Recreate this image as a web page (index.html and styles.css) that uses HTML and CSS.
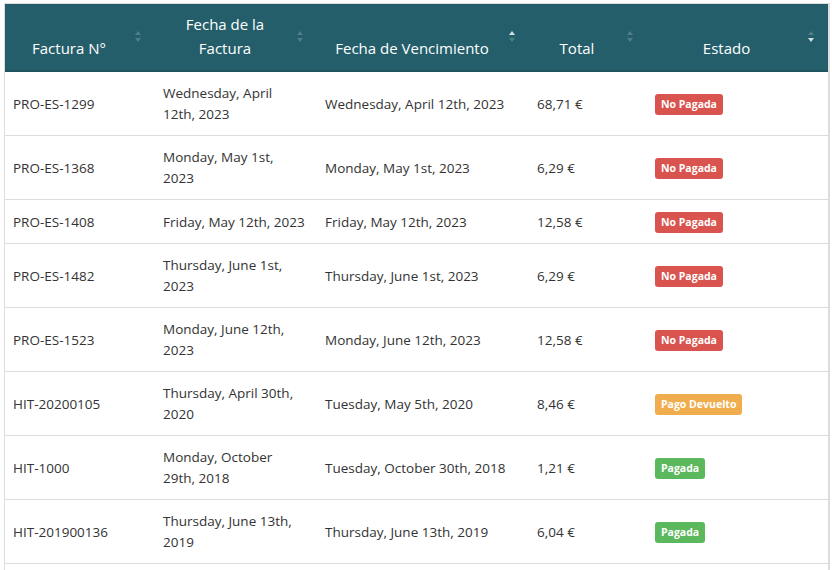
FILE: index.html
```html
<!DOCTYPE html>
<html lang="es">
<head>
<meta charset="utf-8">
<title>Facturas</title>
<link rel="stylesheet" href="styles.css">
</head>
<body>
<div class="panel">
  <table class="invoices">
    <colgroup>
      <col class="c1"><col class="c2"><col class="c3"><col class="c4"><col class="c5">
    </colgroup>
    <thead>
      <tr>
        <th class="sort">Factura N°</th>
        <th class="sort">Fecha de la Factura</th>
        <th class="sort asc">Fecha de Vencimiento</th>
        <th class="sort">Total</th>
        <th class="sort desc">Estado</th>
      </tr>
    </thead>
    <tbody>
      <tr><td>PRO-ES-1299</td><td class="date">Wednesday, April 12th, 2023</td><td>Wednesday, April 12th, 2023</td><td>68,71 €</td><td><span class="label danger">No Pagada</span></td></tr>
      <tr><td>PRO-ES-1368</td><td class="date">Monday, May 1st, 2023</td><td>Monday, May 1st, 2023</td><td>6,29 €</td><td><span class="label danger">No Pagada</span></td></tr>
      <tr><td>PRO-ES-1408</td><td class="date">Friday, May 12th, 2023</td><td>Friday, May 12th, 2023</td><td>12,58 €</td><td><span class="label danger">No Pagada</span></td></tr>
      <tr><td>PRO-ES-1482</td><td class="date">Thursday, June 1st, 2023</td><td>Thursday, June 1st, 2023</td><td>6,29 €</td><td><span class="label danger">No Pagada</span></td></tr>
      <tr><td>PRO-ES-1523</td><td class="date">Monday, June 12th, 2023</td><td>Monday, June 12th, 2023</td><td>12,58 €</td><td><span class="label danger">No Pagada</span></td></tr>
      <tr><td>HIT-20200105</td><td class="date">Thursday, April 30th, 2020</td><td>Tuesday, May 5th, 2020</td><td>8,46 €</td><td><span class="label warning">Pago Devuelto</span></td></tr>
      <tr><td>HIT-1000</td><td class="date">Monday, October 29th, 2018</td><td>Tuesday, October 30th, 2018</td><td>1,21 €</td><td><span class="label success">Pagada</span></td></tr>
      <tr><td>HIT-201900136</td><td class="date">Thursday, June 13th, 2019</td><td>Thursday, June 13th, 2019</td><td>6,04 €</td><td><span class="label success">Pagada</span></td></tr>
      <tr class="filler"><td></td><td></td><td></td><td></td><td></td></tr>
    </tbody>
  </table>
</div>
</body>
</html>
```

FILE: styles.css
```css
html, body {
  margin: 0;
  padding: 0;
  background: #fff;
  overflow: hidden;
}
body {
  padding: 3px 0 0 4px;
  font-family: "Open Sans", "Noto Sans", sans-serif;
  color: #333;
}
.panel {
  width: 823px;
  border-top: 1px solid #ddd;
  border-left: 1px solid #ddd;
  border-right: 2px solid #ddd;
}
.invoices {
  width: 100%;
  border-collapse: collapse;
  table-layout: fixed;
}
.c1 { width: 150px; }
.c2 { width: 162px; }
.c3 { width: 212px; }
.c4 { width: 118px; }
.c5 { width: auto; }

.invoices th {
  position: relative;
  background: #245e6a;
  color: #fff;
  font-weight: normal;
  font-size: 15px;
  line-height: 24px;
  text-align: center;
  vertical-align: bottom;
  padding: 8px 30px 10px 8px;
  border-bottom: 2px solid #1f535e;
}
.sort::before,
.sort::after {
  content: "";
  position: absolute;
  right: 14px;
  width: 0;
  height: 0;
  border-left: 3px solid transparent;
  border-right: 3px solid transparent;
}
.sort::before {
  top: 27px;
  border-bottom: 4px solid rgba(255, 255, 255, 0.2);
}
.sort::after {
  top: 34px;
  border-top: 4px solid rgba(255, 255, 255, 0.2);
}
.asc::before { border-bottom-color: rgba(255, 255, 255, 0.8); }
.desc::after { border-top-color: rgba(255, 255, 255, 0.8); }

.invoices tbody tr { height: 44px; }
.invoices td {
  font-size: 13.5px;
  line-height: 21px;
  padding: 11px 8px 10px;
  border-top: 1px solid #ddd;
  vertical-align: middle;
  text-align: left;
}
.invoices td.date { padding-right: 11px; }
.invoices tbody tr:first-child td { border-top: 0; }
.filler td { height: 40px; }

.label {
  display: inline-block;
  font-size: 10.5px;
  font-weight: bold;
  line-height: 10px;
  color: #fff;
  padding: 5px 6px 6px;
  border-radius: 3px;
  vertical-align: top;
}
.danger { background: #d9534f; }
.warning { background: #f0ad4e; }
.success { background: #5cb85c; }
```
